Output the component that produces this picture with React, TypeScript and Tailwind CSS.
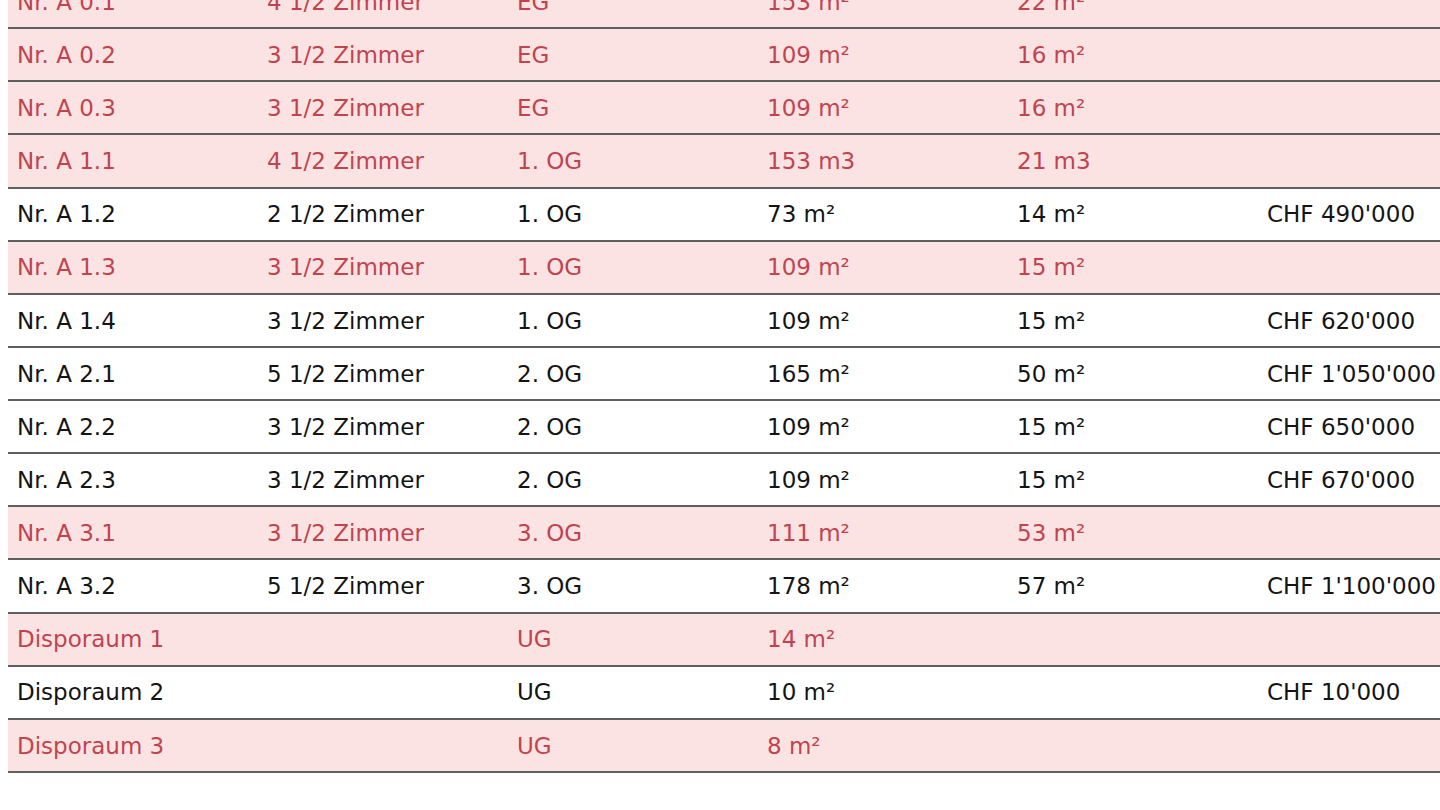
import React from "react";

interface Unit {
  nr: string;
  rooms: string;
  floor: string;
  area: string;
  outdoor: string;
  price: string;
  sold: boolean; // verkauft = rot hinterlegt
}

const units: Unit[] = [
  { nr: "Nr. A 0.1", rooms: "4 1/2 Zimmer", floor: "EG", area: "153 m²", outdoor: "22 m²", price: "", sold: true },
  { nr: "Nr. A 0.2", rooms: "3 1/2 Zimmer", floor: "EG", area: "109 m²", outdoor: "16 m²", price: "", sold: true },
  { nr: "Nr. A 0.3", rooms: "3 1/2 Zimmer", floor: "EG", area: "109 m²", outdoor: "16 m²", price: "", sold: true },
  { nr: "Nr. A 1.1", rooms: "4 1/2 Zimmer", floor: "1. OG", area: "153 m3", outdoor: "21 m3", price: "", sold: true },
  { nr: "Nr. A 1.2", rooms: "2 1/2 Zimmer", floor: "1. OG", area: "73 m²", outdoor: "14 m²", price: "CHF 490'000", sold: false },
  { nr: "Nr. A 1.3", rooms: "3 1/2 Zimmer", floor: "1. OG", area: "109 m²", outdoor: "15 m²", price: "", sold: true },
  { nr: "Nr. A 1.4", rooms: "3 1/2 Zimmer", floor: "1. OG", area: "109 m²", outdoor: "15 m²", price: "CHF 620'000", sold: false },
  { nr: "Nr. A 2.1", rooms: "5 1/2 Zimmer", floor: "2. OG", area: "165 m²", outdoor: "50 m²", price: "CHF 1'050'000", sold: false },
  { nr: "Nr. A 2.2", rooms: "3 1/2 Zimmer", floor: "2. OG", area: "109 m²", outdoor: "15 m²", price: "CHF 650'000", sold: false },
  { nr: "Nr. A 2.3", rooms: "3 1/2 Zimmer", floor: "2. OG", area: "109 m²", outdoor: "15 m²", price: "CHF 670'000", sold: false },
  { nr: "Nr. A 3.1", rooms: "3 1/2 Zimmer", floor: "3. OG", area: "111 m²", outdoor: "53 m²", price: "", sold: true },
  { nr: "Nr. A 3.2", rooms: "5 1/2 Zimmer", floor: "3. OG", area: "178 m²", outdoor: "57 m²", price: "CHF 1'100'000", sold: false },
  { nr: "Disporaum 1", rooms: "", floor: "UG", area: "14 m²", outdoor: "", price: "", sold: true },
  { nr: "Disporaum 2", rooms: "", floor: "UG", area: "10 m²", outdoor: "", price: "CHF 10'000", sold: false },
  { nr: "Disporaum 3", rooms: "", floor: "UG", area: "8 m²", outdoor: "", price: "", sold: true },
];

const App: React.FC = () => {
  return (
    <div className="h-[810px] w-full overflow-hidden bg-white" style={{ fontFamily: '"DejaVu Sans", Verdana, sans-serif' }}>
      {/* Tabelle ist nach oben gescrollt */}
      <div className="ml-2 mt-[-24px] w-[1500px]">
        {units.map((u) => (
          <div
            key={u.nr}
            className={
              u.sold
                ? "grid h-[53.14px] grid-cols-[250px_250px_250px_250px_250px_250px] items-center border-b-2 border-[#5f5f5f] bg-[#fbe3e3] pt-px text-[23px] text-[#c2434e]"
                : "grid h-[53.14px] grid-cols-[250px_250px_250px_250px_250px_250px] items-center border-b-2 border-[#5f5f5f] bg-white pt-px text-[23px] text-[#141414]"
            }
          >
            <div className="whitespace-nowrap pl-[9px]">{u.nr}</div>
            <div className="whitespace-nowrap pl-[9px]">{u.rooms}</div>
            <div className="whitespace-nowrap pl-[9px]">{u.floor}</div>
            <div className="whitespace-nowrap pl-[9px]">{u.area}</div>
            <div className="whitespace-nowrap pl-[9px]">{u.outdoor}</div>
            <div className="whitespace-nowrap pl-[9px]">{u.price}</div>
          </div>
        ))}
      </div>
    </div>
  );
};

export default App;
